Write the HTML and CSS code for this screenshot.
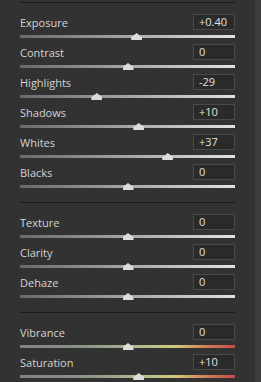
FILE: index.html
```html
<!DOCTYPE html>
<html lang="en">
<head>
    <meta charset="UTF-8">
    <title>Basic Panel</title>
    <link rel="stylesheet" href="styles.css">
</head>
<body>
    <div class="panel">
        <div class="sliders">
            <div class="group">
                <div class="row">
                    <div class="head"><span class="label">Exposure</span><span class="value">+0.40</span></div>
                    <div class="track"><span class="thumb" style="left: 54%"></span></div>
                </div>
                <div class="row">
                    <div class="head"><span class="label">Contrast</span><span class="value">0</span></div>
                    <div class="track"><span class="thumb" style="left: 50%"></span></div>
                </div>
                <div class="row">
                    <div class="head"><span class="label">Highlights</span><span class="value">-29</span></div>
                    <div class="track"><span class="thumb" style="left: 35.5%"></span></div>
                </div>
                <div class="row">
                    <div class="head"><span class="label">Shadows</span><span class="value">+10</span></div>
                    <div class="track"><span class="thumb" style="left: 55%"></span></div>
                </div>
                <div class="row">
                    <div class="head"><span class="label">Whites</span><span class="value">+37</span></div>
                    <div class="track"><span class="thumb" style="left: 68.5%"></span></div>
                </div>
                <div class="row">
                    <div class="head"><span class="label">Blacks</span><span class="value">0</span></div>
                    <div class="track"><span class="thumb" style="left: 50%"></span></div>
                </div>
            </div>

            <div class="group">
                <div class="row">
                    <div class="head"><span class="label">Texture</span><span class="value">0</span></div>
                    <div class="track"><span class="thumb" style="left: 50%"></span></div>
                </div>
                <div class="row">
                    <div class="head"><span class="label">Clarity</span><span class="value">0</span></div>
                    <div class="track"><span class="thumb" style="left: 50%"></span></div>
                </div>
                <div class="row">
                    <div class="head"><span class="label">Dehaze</span><span class="value">0</span></div>
                    <div class="track"><span class="thumb" style="left: 50%"></span></div>
                </div>
            </div>

            <div class="group">
                <div class="row">
                    <div class="head"><span class="label">Vibrance</span><span class="value">0</span></div>
                    <div class="track color"><span class="thumb" style="left: 50%"></span></div>
                </div>
                <div class="row">
                    <div class="head"><span class="label">Saturation</span><span class="value">+10</span></div>
                    <div class="track color"><span class="thumb" style="left: 55%"></span></div>
                </div>
            </div>
        </div>
        <div class="scrollbar"></div>
    </div>
</body>
</html>
```

FILE: styles.css
```css
html, body {
    margin: 0;
    background: #323232;
}
body {
    font-family: "Open Sans", "Noto Sans", sans-serif;
    font-size: 11px;
    color: #d4d4d4;
    overflow: hidden;
}
.panel {
    display: flex;
    width: 261px;
    height: 382px;
}
.sliders {
    flex: 1;
    padding-left: 20px;
    padding-right: 20px;
}
.scrollbar {
    width: 6px;
    background: #3c3c3c;
}
.group {
    border-top: 1px solid #1b1b1b;
    margin-top: 2px;
    padding-top: 11px;
    padding-bottom: 8px;
}
.group + .group {
    margin-top: 0;
}
.row {
    height: 30px;
}
.head {
    display: flex;
    justify-content: space-between;
    align-items: center;
    height: 16px;
}
.label {
    line-height: 16px;
    padding-top: 2px;
}
.value {
    box-sizing: border-box;
    width: 42px;
    height: 16px;
    line-height: 14px;
    padding-left: 5px;
    border: 1px solid #4a4a4a;
    background: #2a2a2a;
    color: #e0e0e0;
}
.track {
    position: relative;
    height: 3px;
    margin-top: 5px;
    background: linear-gradient(to right, #6a6a6a, #a6a6a6 50%, #e2e2e2);
}
.track.color {
    background: linear-gradient(to right, #828282, #8a9487 30%, #aebb90 55%, #d4c87c 72%, #d07a55 88%, #c94848);
}
.thumb {
    position: absolute;
    top: -2px;
    width: 11px;
    height: 7px;
    margin-left: -5px;
    background: #dcdcdc;
    clip-path: polygon(50% 0, 100% 60%, 100% 100%, 0 100%, 0 60%);
}
```
